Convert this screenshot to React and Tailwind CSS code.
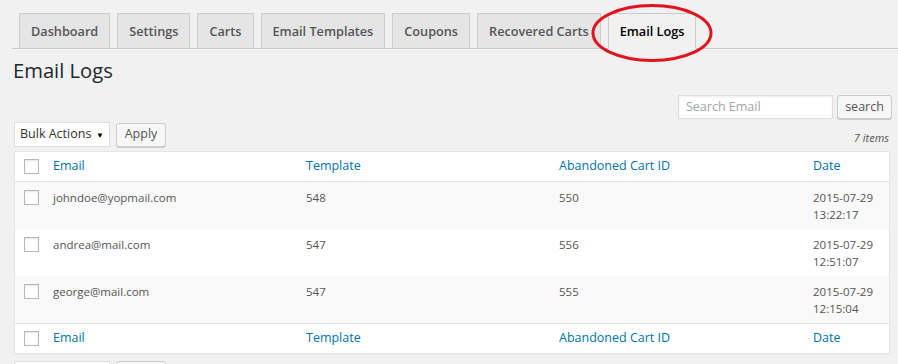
import React from "react";

const tabs = ["Dashboard", "Settings", "Carts", "Email Templates", "Coupons", "Recovered Carts", "Email Logs"];

const rows = [
  { email: "johndoe@yopmail.com", template: "548", cart: "550", date: "2015-07-29", time: "13:22:17" },
  { email: "andrea@mail.com", template: "547", cart: "556", date: "2015-07-29", time: "12:51:07" },
  { email: "george@mail.com", template: "547", cart: "555", date: "2015-07-29", time: "12:15:04" },
];

const grid = "grid grid-cols-[29px_253px_253px_254px_1fr]";

function Check() {
  return <span className="block w-[15px] h-[15px] border border-[#b4b9be] bg-white shadow-[inset_0_1px_2px_rgba(0,0,0,0.1)]" />;
}

function HeadRow({ top }) {
  return (
    <div className={`${grid} h-[30px] items-center bg-white text-[#0073aa] text-[12.5px] ${top ? "border-b" : "border-t"} border-[#e1e1e1]`}>
      <div className="pl-[9px]"><Check /></div>
      <div className="pl-[9px]">Email</div>
      <div className="pl-[9px]">Template</div>
      <div className="pl-[9px]">Abandoned Cart ID</div>
      <div className="pl-[9px]">Date</div>
    </div>
  );
}

export default function App() {
  return (
    <div className="relative w-[898px] h-[364px] overflow-hidden bg-[#f1f1f1] text-[12.5px] text-[#555]" style={{ fontFamily: "'Open Sans', sans-serif" }}>
      {/* tabs */}
      <div className="ml-[12px] pt-[13px] flex border-b border-[#ccc] h-[49px]">
        {tabs.map((t, i) => {
          const active = i === tabs.length - 1;
          return (
            <div
              key={t}
              className={`ml-[7px] h-[36px] px-[11px] pt-[1px] flex items-center border border-[#ccc] text-[12.7px] font-semibold ${
                active ? "bg-[#f1f1f1] border-b-[#f1f1f1] text-black" : "bg-[#e5e5e5] text-[#555]"
              }`}
            >
              {t}
            </div>
          );
        })}
      </div>
      <svg className="absolute left-[590px] top-[3px]" width="124" height="62" viewBox="0 0 124 62">
        <ellipse cx="62" cy="30" rx="59" ry="27.5" fill="none" stroke="#e0141e" strokeWidth="3" />
      </svg>

      <h1 className="ml-[13px] mt-[7px] text-[20.2px] leading-[29px] text-[#23282d]">Email Logs</h1>

      {/* search */}
      <div className="flex justify-end gap-[4px] mr-[6px] mt-[10px]">
        <div className="w-[155px] h-[24px] border border-[#ddd] bg-white px-[7px] flex items-center text-[#a0a5aa] text-[12.5px] shadow-[inset_0_1px_2px_rgba(0,0,0,0.07)]">
          Search Email
        </div>
        <div className="w-[55px] h-[24px] border border-[#ccc] rounded-[3px] bg-[#f7f7f7] flex items-center justify-center text-[#555] shadow-[0_1px_0_#ccc]">
          search
        </div>
      </div>

      {/* bulk actions */}
      <div className="flex items-center mt-[3px] ml-[14px] mr-[9px] h-[25px]">
        <div className="w-[96px] h-[25px] border border-[#ddd] bg-white flex items-center justify-between pl-[5px] pr-[5px] text-[#333]">
          <span>Bulk Actions</span>
          <span className="text-[8px] text-black">▼</span>
        </div>
        <div className="ml-[6px] w-[50px] h-[24px] border border-[#ccc] rounded-[3px] bg-[#f7f7f7] flex items-center justify-center shadow-[0_1px_0_#ccc]">
          Apply
        </div>
        <div className="ml-auto italic text-[11px] text-[#555] pt-[8px]">7 items</div>
      </div>

      {/* table */}
      <div className="mt-[4px] ml-[14px] w-[876px] border border-[#e5e5e5] bg-white shadow-[0_1px_1px_rgba(0,0,0,0.04)]">
        <HeadRow top />
        {rows.map((r, i) => (
          <div key={r.email} className={`${grid} h-[47px] pt-[7px] text-[11.5px] ${i % 2 === 0 ? "bg-[#f9f9f9]" : "bg-white"}`}>
            <div className="pl-[9px] pt-[1px]"><Check /></div>
            <div className="pl-[9px] leading-[17px]">{r.email}</div>
            <div className="pl-[9px] leading-[17px]">{r.template}</div>
            <div className="pl-[9px] leading-[17px]">{r.cart}</div>
            <div className="pl-[9px] leading-[17px]">
              <div>{r.date}</div>
              <div>{r.time}</div>
            </div>
          </div>
        ))}
        <HeadRow />
      </div>

      {/* bottom bulk actions (cut off) */}
      <div className="flex mt-[7px] ml-[14px]">
        <div className="w-[96px] h-[25px] border border-[#ddd] bg-white" />
        <div className="ml-[6px] w-[50px] h-[24px] border border-[#ccc] rounded-[3px] bg-[#f7f7f7]" />
      </div>
    </div>
  );
}
